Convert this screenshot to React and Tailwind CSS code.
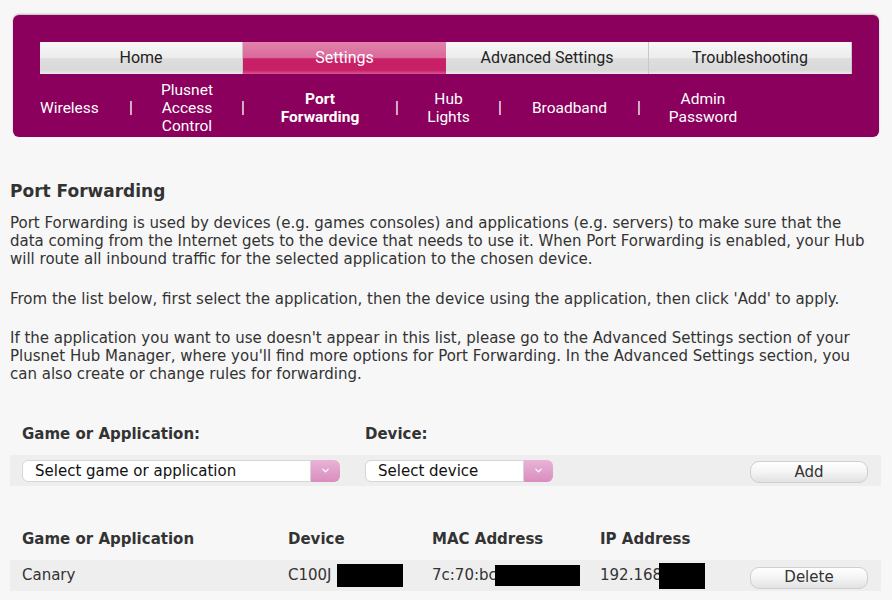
import { ChevronDown } from 'lucide-react'

const tabs = ['Home', 'Settings', 'Advanced Settings', 'Troubleshooting']

const subnav = [
  { label: ['Wireless'], w: 'w-[86px] text-left' },
  { label: ['Plusnet', 'Access', 'Control'], w: 'w-[102px] text-center' },
  { label: ['Port', 'Forwarding'], w: 'w-[144px] text-center font-bold' },
  { label: ['Hub', 'Lights'], w: 'w-[93px] text-center' },
  { label: ['Broadband'], w: 'w-[129px] text-center' },
  { label: ['Admin', 'Password'], w: 'w-[118px] text-center' },
]

function Select({ text, width }) {
  return (
    <div className={`flex h-[22px] items-stretch ${width}`}>
      <div className="flex flex-1 items-center rounded-l-md border border-[#d6d6d6] bg-white pl-3 pt-[2px] text-[15px] leading-none text-[#111]">
        {text}
      </div>
      <div className="flex w-[29px] items-center justify-center rounded-r-md bg-gradient-to-b from-[#e9b3d6] to-[#d98dbf]">
        <ChevronDown size={11} strokeWidth={3} className="text-white" />
      </div>
    </div>
  )
}

function Btn({ children }) {
  return (
    <button className="h-[22px] w-[118px] rounded-[9px] border border-[#cfcfcf] bg-gradient-to-b from-white via-[#f4f4f4] to-[#e2e2e2] text-[15px] leading-none text-[#333]">
      {children}
    </button>
  )
}

export default function App() {
  return (
    <div className="min-h-[600px] bg-[#f7f7f7] font-['DejaVu_Sans',Verdana,sans-serif] text-[#333]">
      <div className="pl-[13px] pr-[13px] pt-[15px]">
        <div className="h-[122px] rounded-md bg-[#8a005c] shadow-[0_-1px_2px_rgba(0,0,0,0.25)]">
          <div className="flex pl-[27px] pt-[27px]">
            {tabs.map((t) => (
              <div
                key={t}
                className={
                  t === 'Settings'
                    ? "flex h-[32px] w-[203px] items-center justify-center bg-[linear-gradient(to_bottom,#e283ad_0%,#d9689a_50%,#c92068_52%,#c72067_88%,#d85590_100%)] font-['Roboto',sans-serif] text-[16px] text-white"
                    : "flex h-[32px] w-[203px] items-center justify-center border-r border-[#c8c8c8] bg-[linear-gradient(to_bottom,#f7f7f7_0%,#ececec_50%,#dedede_52%,#d9d9d9_88%,#ebebeb_100%)] font-['Roboto',sans-serif] text-[16px] text-[#222]"
                }
              >
                {t}
              </div>
            ))}
          </div>
          <div className="flex h-[60px] items-center pl-[27px] pt-[8px] font-['Roboto',sans-serif] text-[15.5px] leading-[18px] text-white">
            {subnav.map((s, i) => (
              <div key={i} className="flex items-center">
                {i > 0 && <span className="w-[10px] text-center text-[16px]">|</span>}
                <div className={s.w}>
                  {s.label.map((l) => (
                    <div key={l}>{l}</div>
                  ))}
                </div>
              </div>
            ))}
          </div>
        </div>
      </div>

      <div className="px-[10px] pt-[44px]">
        <h1 className="text-[17px] font-bold leading-[20px]">Port Forwarding</h1>
        <p className="mt-[13px] w-[880px] text-[15px] leading-[18px]">
          Port Forwarding is used by devices (e.g. games consoles) and applications (e.g. servers) to make sure that the
          <br />
          data coming from the Internet gets to the device that needs to use it. When Port Forwarding is enabled, your Hub
          <br />
          will route all inbound traffic for the selected application to the chosen device.
        </p>
        <p className="mt-[22px] w-[880px] text-[15px] leading-[18px]">
          From the list below, first select the application, then the device using the application, then click 'Add' to apply.
        </p>
        <p className="mt-[21px] w-[880px] text-[15px] leading-[18px]">
          If the application you want to use doesn't appear in this list, please go to the Advanced Settings section of your
          <br />
          Plusnet Hub Manager, where you'll find more options for Port Forwarding. In the Advanced Settings section, you
          <br />
          can also create or change rules for forwarding.
        </p>

        <div className="mt-[42px] flex pl-[12px] text-[15px] font-bold leading-[18px]">
          <div className="w-[343px]">Game or Application:</div>
          <div>Device:</div>
        </div>
        <div className="mt-[12px] flex h-[31px] w-[871px] items-center bg-[#eeeeee] pl-[12px]">
          <Select text="Select game or application" width="w-[318px]" />
          <div className="w-[25px]" />
          <Select text="Select device" width="w-[188px]" />
          <div className="flex-1" />
          <div className="mr-[13px] mt-[2px]">
            <Btn>Add</Btn>
          </div>
        </div>

        <div className="mt-[43px] flex h-[20px] items-center pl-[12px] text-[15px] font-bold">
          <div className="w-[266px]">Game or Application</div>
          <div className="w-[144px]">Device</div>
          <div className="w-[168px]">MAC Address</div>
          <div>IP Address</div>
        </div>
        <div className="mt-[11px] flex h-[31px] w-[871px] items-center bg-[#eeeeee] pl-[12px] text-[15px]">
          <div className="w-[266px]">Canary</div>
          <div className="flex w-[144px] items-center">
            <span className="w-[49px] whitespace-nowrap">C100J</span>
            <span className="h-[23px] w-[66px] bg-black" />
          </div>
          <div className="flex w-[168px] items-center">
            <span className="w-[63px] whitespace-nowrap">7c:70:bc</span>
            <span className="h-[21px] w-[85px] bg-black" />
          </div>
          <div className="flex w-[150px] items-center">
            <span className="w-[59px] whitespace-nowrap">192.168</span>
            <span className="h-[26px] w-[46px] bg-black" />
          </div>
          <div className="mt-[4px]">
            <Btn>Delete</Btn>
          </div>
        </div>
      </div>
    </div>
  )
}
